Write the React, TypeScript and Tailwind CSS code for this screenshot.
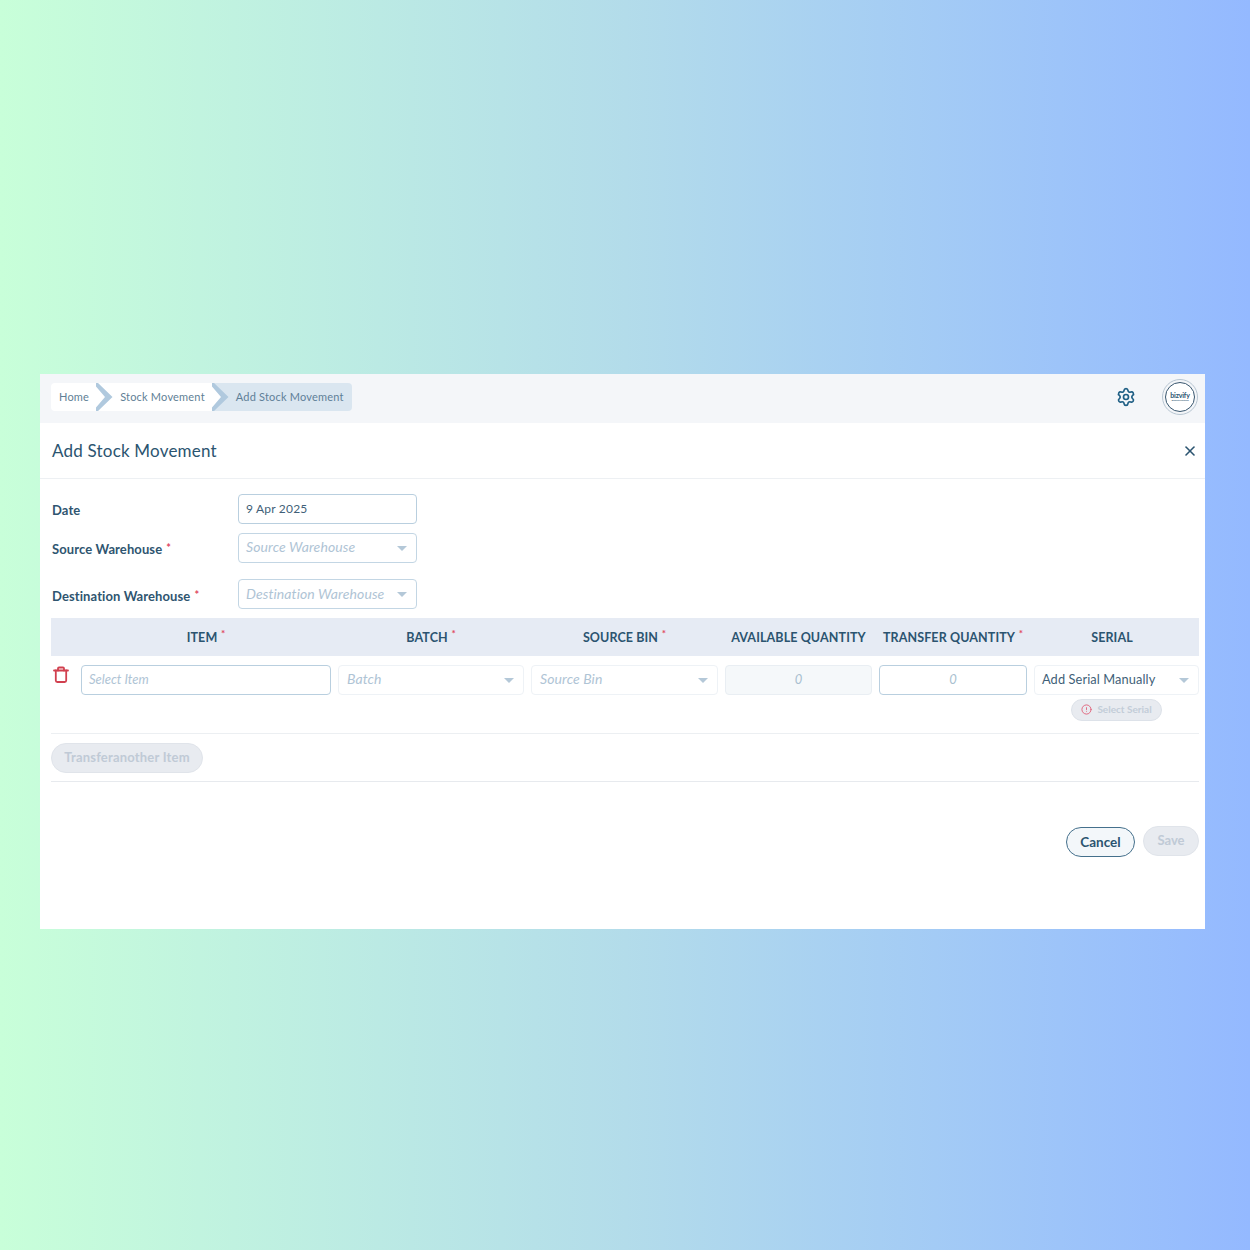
import React from "react";
import { Settings, X, AlertCircle } from "lucide-react";

const font = "font-['Lato',sans-serif]";

function Chevron({ last }: { last?: boolean }) {
  return (
    <svg width="17" height="28" viewBox="0 0 17 28" className="shrink-0">
      <rect width="17" height="28" fill="#ffffff" />
      {last && <path d="M1 0 H17 V28 H1 L9.5 14 Z" fill="#dae6f0" />}
      <path d="M2 0 L16.5 14 L2 28 L0 28 L0 24.5 L9 14 L0 3.5 L0 0 Z" fill="#b0c9de" />
    </svg>
  );
}

function Caret() {
  return <span className="w-0 h-0 border-l-[5px] border-r-[5px] border-t-[5px] border-l-transparent border-r-transparent border-t-[#b4c8d8] shrink-0" />;
}

function Select({ text, width, strong, dim, tight, low }: { text: string; width: string; strong?: boolean; dim?: boolean; tight?: boolean; low?: boolean }) {
  const placeholder = `text-[14px] italic text-[#afc4d5] tracking-[0.1px] ${low ? "pb-[2px]" : "pb-[4px]"}`;
  return (
    <div className={`${width} h-[30px] flex items-center justify-between ${tight || strong ? "pl-[7px]" : "pl-2"} pr-[9px] rounded-[4px] border bg-white ${dim ? "border-[#eef2f6]" : "border-[#c3d6e4]"}`}>
      <span className={strong ? "text-[12.8px] text-[#3f5f78] tracking-[0.1px]" : placeholder}>{text}</span>
      <Caret />
    </div>
  );
}

function Head({ label, req, width }: { label: string; req?: boolean; width: string }) {
  return (
    <div className={`${width} flex justify-center items-center pt-[2px] text-[12.5px] font-bold text-[#2b5470] tracking-[0.1px]`}>
      <span className={`relative ${req ? "pr-[8px]" : ""}`}>
        {label}
        {req && <span className="absolute right-0 -top-[3px] text-[10px] text-[#e0475f]">*</span>}
      </span>
    </div>
  );
}

function Label({ children, req, className }: { children: string; req?: boolean; className?: string }) {
  return (
    <div className={`w-[187px] pl-[1px] text-[13px] font-bold text-[#2f5570] tracking-[0.1px] ${className ?? ""}`}>
      {children}
      {req && <span className="text-[#e0475f] text-[11px] ml-[4px] align-[2px]">*</span>}
    </div>
  );
}

function TrashIcon() {
  return (
    <svg width="18" height="18" viewBox="0 0 18 18" fill="none" stroke="#d1404f" strokeWidth="1.8" strokeLinecap="round" strokeLinejoin="round" className="ml-[1px]">
      <path d="M2 4.5 H16" />
      <path d="M6 4.5 V2.5 Q6 1.5 7 1.5 H11 Q12 1.5 12 2.5 V4.5" />
      <path d="M3.8 4.5 V14.5 Q3.8 16 5.3 16 H12.7 Q14.2 16 14.2 14.5 V4.5" />
    </svg>
  );
}

export default function App() {
  return (
    <div className={`${font} w-[1250px] h-[1250px] pt-[374px] pl-[40px] bg-gradient-to-r from-[#c8ffd9] via-[#b3dcea] to-[#94b9ff]`}>
      <div className="w-[1165px] h-[555px] bg-white flex flex-col">
        <div className="h-[49px] bg-[#f4f6f9] flex items-center justify-between pl-[11px] pr-[7px] pb-[3px]">
          <div className="flex items-center h-[28px] text-[11px] tracking-[0.2px] text-[#5f7f96]">
            <div className="h-[28px] pl-2 pr-[7px] flex items-center bg-white rounded-l-[4px]">Home</div>
            <Chevron />
            <div className="h-[28px] pl-[7px] pr-[7px] flex items-center bg-white">Stock Movement</div>
            <Chevron last />
            <div className="h-[28px] pl-[7px] pr-2 flex items-center bg-[#dae6f0] rounded-r-[4px] text-[#5f8098]">Add Stock Movement</div>
          </div>
          <div className="flex items-center gap-[26px]">
            <Settings size={20} strokeWidth={2} className="text-[#1f5f85]" />
            <div className="w-[36px] h-[36px] rounded-full border border-[#b8c6d2] flex items-center justify-center">
              <div className="w-[30px] h-[30px] rounded-full border border-[#38566e] bg-white flex flex-col items-center justify-center text-[7px] leading-[7px] font-bold text-[#2b5470] tracking-tight">
                <span>bizvify</span>
                <span className="text-[2.5px] leading-[3px] font-normal">Business Solutions</span>
              </div>
            </div>
          </div>
        </div>

        <div className="h-[56px] flex items-center justify-between pl-[12px] pr-[7px] border-b border-[#edf0f3]">
          <div className="text-[17px] text-[#2b5470] tracking-[0.2px]">Add Stock Movement</div>
          <X size={16} strokeWidth={2.4} className="text-[#2b5470]" />
        </div>

        <div className="pl-[11px] pr-[6px] pt-[15px]">
          <div className="flex items-center h-[30px]">
            <Label className="pt-[4px]">Date</Label>
            <div className="w-[179px] h-[30px] flex items-center pl-[7px] rounded-[4px] border border-[#b9cfdf] text-[12px] text-[#3f5f78] tracking-[0.2px]">9 Apr 2025</div>
          </div>
          <div className="flex items-center h-[30px] mt-[9px]">
            <Label req className="pt-[3px]">Source Warehouse</Label>
            <Select text="Source Warehouse" width="w-[179px]" tight />
          </div>
          <div className="flex items-center h-[30px] mt-[16px]">
            <Label req className="pt-[5px]">Destination Warehouse</Label>
            <Select text="Destination Warehouse" width="w-[179px]" tight low />
          </div>

          <div className="mt-[9px] h-[38px] bg-[#e6ebf4] flex items-center">
            <div className="w-[30px]" />
            <Head label="ITEM" req width="w-[250px]" />
            <div className="w-[7px]" />
            <Head label="BATCH" req width="w-[186px]" />
            <div className="w-[7px]" />
            <Head label="SOURCE BIN" req width="w-[187px]" />
            <div className="w-[7px]" />
            <Head label="AVAILABLE QUANTITY" width="w-[147px]" />
            <div className="w-[7px]" />
            <Head label="TRANSFER QUANTITY" req width="w-[148px]" />
            <div className="w-[7px]" />
            <Head label="SERIAL" width="w-[156px]" />
          </div>

          <div className="flex pt-[9px] h-[78px] border-b border-[#eceff2]">
            <div className="w-[30px] pt-[1px]">
              <TrashIcon />
            </div>
            <div className="w-[250px] h-[30px] flex items-center pl-[7px] rounded-[4px] border border-[#b9cfdf] text-[13px] italic text-[#afc4d5]">
              <span>Select Item</span>
            </div>
            <div className="w-[7px]" />
            <Select text="Batch" width="w-[186px]" dim />
            <div className="w-[7px]" />
            <Select text="Source Bin" width="w-[187px]" dim />
            <div className="w-[7px]" />
            <div className="w-[147px] h-[30px] flex items-center justify-center rounded-[4px] border border-[#e9eef3] bg-[#f5f8fa] text-[13px] italic text-[#a9bfd0]">0</div>
            <div className="w-[7px]" />
            <div className="w-[148px] h-[30px] flex items-center justify-center rounded-[4px] border border-[#b9cfdf] text-[13px] italic text-[#a9bfd0]">0</div>
            <div className="w-[7px]" />
            <div className="w-[165px] flex flex-col items-center">
              <Select text="Add Serial Manually" width="w-[165px]" strong dim />
              <div className="mt-[4px] h-[22px] w-[91px] rounded-full bg-[#e8ebf0] border border-[#dde2e9] flex items-center justify-center gap-[5px] text-[10px] font-bold text-[#c3cdd8] pb-[1px]">
                <AlertCircle size={11} className="text-[#e0607a]" />
                Select Serial
              </div>
            </div>
          </div>

          <div className="h-[48px] flex items-center border-b border-[#e7eaee]">
            <div className="h-[30px] w-[152px] rounded-full bg-[#e8ebf0] border border-[#e0e4ea] flex items-center justify-center text-[13px] font-bold text-[#c0cad6] tracking-[0.2px]">Transferanother Item</div>
          </div>

          <div className="flex justify-end gap-[8px] pt-[44px]">
            <div className="h-[30px] w-[69px] mt-[1px] rounded-full bg-[#f3f7fa] border border-[#45708c] flex items-center justify-center text-[13.5px] font-bold text-[#2b5470]">Cancel</div>
            <div className="h-[30px] w-[56px] rounded-full bg-[#e8ebf0] border border-[#e0e4ea] flex items-center justify-center text-[13px] font-bold text-[#c0cad6]">Save</div>
          </div>
        </div>
      </div>
    </div>
  );
}
